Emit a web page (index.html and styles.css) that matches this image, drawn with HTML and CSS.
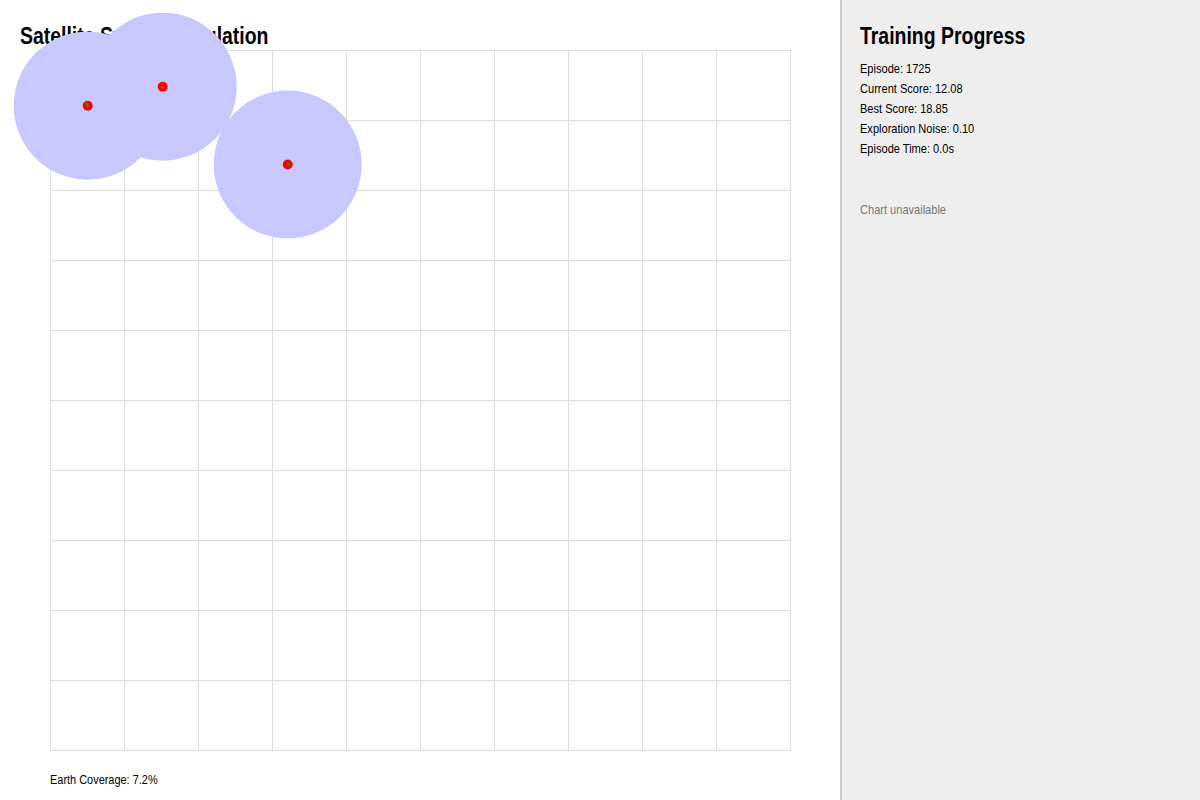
FILE: index.html
```html
<!DOCTYPE html>
<html lang="en">
<head>
<meta charset="utf-8">
<title>Satellite Swarm Simulation</title>
<link rel="stylesheet" href="styles.css">
</head>
<body>
<main class="sim">
  <h1 class="sim-title">Satellite Swarm Simulation</h1>
  <div class="board"></div>
  <p class="coverage">Earth Coverage: 7.2%</p>
  <svg class="overlay" width="840" height="800" viewBox="0 0 840 800" aria-hidden="true">
    <g class="zones">
      <circle cx="87.7" cy="105.7" r="74"/>
      <circle cx="162.7" cy="86.7" r="74"/>
      <circle cx="287.7" cy="164.5" r="74"/>
    </g>
    <g class="sats">
      <circle cx="87.7" cy="105.7" r="5"/>
      <circle cx="162.7" cy="86.7" r="5"/>
      <circle cx="287.7" cy="164.5" r="5"/>
    </g>
    <g class="vel">
      <line x1="86" y1="102.5" x2="88.5" y2="106.5"/>
      <line x1="160.5" y1="87.6" x2="163.5" y2="87.6"/>
      <line x1="288.2" y1="163.2" x2="289.2" y2="165.5"/>
    </g>
  </svg>
</main>
<aside class="panel">
  <h2 class="panel-title">Training Progress</h2>
  <ul class="stats">
    <li>Episode: 1725</li>
    <li>Current Score: 12.08</li>
    <li>Best Score: 18.85</li>
    <li>Exploration Noise: 0.10</li>
    <li>Episode Time: 0.0s</li>
  </ul>
  <p class="chart-note">Chart unavailable</p>
</aside>
</body>
</html>
```
FILE: styles.css
```css
html, body {
  margin: 0;
  padding: 0;
}
body {
  display: flex;
  width: 1200px;
  height: 800px;
  overflow: hidden;
  font-family: "Liberation Sans Narrow", "Liberation Sans", Arial, sans-serif;
  color: #000;
  background: #fff;
}
.sim {
  position: relative;
  width: 840px;
  height: 800px;
  flex: none;
}
.sim-title {
  margin: 0;
  padding: 24px 20px 0;
  font-size: 24px;
  line-height: 24px;
  font-weight: bold;
  transform: scaleX(0.81);
  transform-origin: 20px 0;
}
.board {
  margin: 2px 0 0 50px;
  width: 741px;
  height: 701px;
  background-image:
    linear-gradient(to right, #dcdcdc 1px, transparent 1px),
    linear-gradient(to bottom, #dcdcdc 1px, transparent 1px);
  background-size: 74px 70px;
}
.coverage {
  margin: 22px 0 0 50px;
  font-size: 12.5px;
  line-height: 14px;
  transform: scaleX(0.875);
  transform-origin: 0 0;
}
.overlay {
  position: absolute;
  top: 0;
  left: 0;
  pointer-events: none;
}
.zones circle {
  fill: #c8c8ff;
}
.sats circle {
  fill: #ff0000;
}
.vel line {
  stroke: #00b400;
  stroke-width: 1.6;
}
.panel {
  flex: 1;
  background: #eeeeee;
  border-left: 2px solid #cccccc;
  padding: 22px 18px 0;
}
.panel-title {
  margin: 0 0 9px;
  font-size: 24px;
  line-height: 28px;
  font-weight: bold;
  transform: scaleX(0.81);
  transform-origin: 0 0;
}
.stats {
  list-style: none;
  margin: 0;
  padding: 0;
  font-size: 13px;
  line-height: 20px;
  transform: scaleX(0.85);
  transform-origin: 0 0;
}
.chart-note {
  margin: 41px 0 0;
  font-size: 13px;
  line-height: 20px;
  color: #777777;
  transform: scaleX(0.85);
  transform-origin: 0 0;
}
```
